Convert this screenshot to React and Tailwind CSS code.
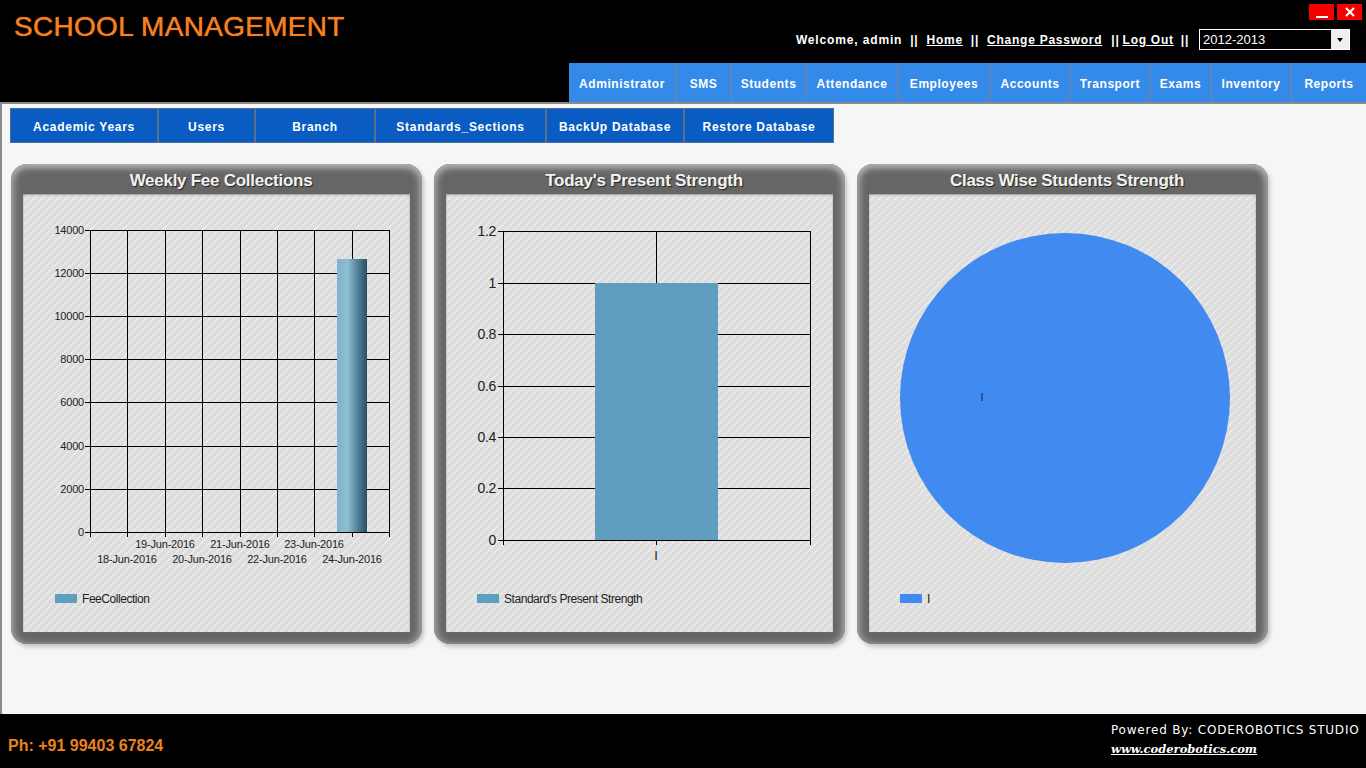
import React from "react";

const topNav = [
  { label: "Administrator", w: "w-[108px]" },
  { label: "SMS", w: "w-[55px]" },
  { label: "Students", w: "w-[75px]" },
  { label: "Attendance", w: "w-[92px]" },
  { label: "Employees", w: "w-[92px]" },
  { label: "Accounts", w: "w-[80px]" },
  { label: "Transport", w: "w-[80px]" },
  { label: "Exams", w: "w-[61px]" },
  { label: "Inventory", w: "w-[80px]" },
  { label: "Reports", w: "w-[74px]" },
];

const subNav = [
  { label: "Academic Years", w: "w-[148px]" },
  { label: "Users", w: "w-[97px]" },
  { label: "Branch", w: "w-[120px]" },
  { label: "Standards_Sections", w: "w-[171px]" },
  { label: "BackUp Database", w: "w-[138px]" },
  { label: "Restore Database", w: "w-[148px]" },
];

// chart drawings use page coordinates through the viewBox
const feeX = [90, 127, 165, 202, 240, 277, 314, 352, 389];
const feeY = [
  { y: 230, v: "14000" },
  { y: 273, v: "12000" },
  { y: 316, v: "10000" },
  { y: 359, v: "8000" },
  { y: 402, v: "6000" },
  { y: 446, v: "4000" },
  { y: 489, v: "2000" },
  { y: 532, v: "0" },
];
const feeDates = [
  { x: 127, y: 563, t: "18-Jun-2016" },
  { x: 165, y: 548, t: "19-Jun-2016" },
  { x: 202, y: 563, t: "20-Jun-2016" },
  { x: 240, y: 548, t: "21-Jun-2016" },
  { x: 277, y: 563, t: "22-Jun-2016" },
  { x: 314, y: 548, t: "23-Jun-2016" },
  { x: 352, y: 563, t: "24-Jun-2016" },
];
const strengthY = [
  { y: 231, v: "1.2" },
  { y: 283, v: "1" },
  { y: 334, v: "0.8" },
  { y: 386, v: "0.6" },
  { y: 437, v: "0.4" },
  { y: 488, v: "0.2" },
  { y: 540, v: "0" },
];

function Legend({ x, color, label }) {
  return (
    <g>
      <rect x={x} y={594} width={22} height={9} fill={color} />
      <text x={x + 27} y={603} fontSize="12" letterSpacing="-0.45" fill="#222">
        {label}
      </text>
    </g>
  );
}

function WeeklyChart() {
  return (
    <svg viewBox="23 194 387 438" className="w-full h-full font-['Liberation_Sans',sans-serif]">
      <defs>
        <linearGradient id="feeBar" x1="0" y1="0" x2="1" y2="0">
          <stop offset="0" stopColor="#7fb2cb" />
          <stop offset="0.35" stopColor="#8fbdd3" />
          <stop offset="0.7" stopColor="#4f7f98" />
          <stop offset="1" stopColor="#2b4f62" />
        </linearGradient>
      </defs>
      {feeX.map((x) => (
        <line key={x} x1={x + 0.5} y1={230} x2={x + 0.5} y2={537} stroke="#000" />
      ))}
      {feeY.map((row) => (
        <g key={row.y}>
          <line x1={85} y1={row.y + 0.5} x2={390} y2={row.y + 0.5} stroke="#000" />
          <text x={84} y={row.y + 4} textAnchor="end" fontSize="11" letterSpacing="-0.2" fill="#222">
            {row.v}
          </text>
        </g>
      ))}
      <rect x={337} y={259} width={30} height={273} fill="url(#feeBar)" />
      {feeDates.map((d) => (
        <text key={d.t} x={d.x} y={d.y} textAnchor="middle" fontSize="11" letterSpacing="-0.2" fill="#222">
          {d.t}
        </text>
      ))}
      <Legend x={55} color="#5f9ebf" label="FeeCollection" />
    </svg>
  );
}

function PresentChart() {
  return (
    <svg viewBox="446 194 387 438" className="w-full h-full font-['Liberation_Sans',sans-serif]">
      {[503, 656, 810].map((x) => (
        <line key={x} x1={x + 0.5} y1={231} x2={x + 0.5} y2={545} stroke="#000" />
      ))}
      {strengthY.map((row) => (
        <g key={row.y}>
          <line x1={498} y1={row.y + 0.5} x2={811} y2={row.y + 0.5} stroke="#000" />
          <text x={496} y={row.y + 5} textAnchor="end" fontSize="14" letterSpacing="-0.3" fill="#222">
            {row.v}
          </text>
        </g>
      ))}
      <rect x={595} y={283} width={123} height={257} fill="#5f9ebf" />
      <text x={656} y={560} textAnchor="middle" fontSize="13" fill="#222">
        I
      </text>
      <Legend x={477} color="#5f9ebf" label="Standard's Present Strength" />
    </svg>
  );
}

function ClassChart() {
  return (
    <svg viewBox="869 194 387 438" className="w-full h-full font-['Liberation_Sans',sans-serif]">
      <circle cx={1065} cy={398} r={165} fill="#418af0" />
      <text x={982} y={401} textAnchor="middle" fontSize="11" fill="#1a1a4a">
        I
      </text>
      <Legend x={900} color="#418af0" label="I" />
    </svg>
  );
}

function Panel({ title, children }) {
  return (
    <div className="w-[411px] h-[480px] flex flex-col rounded-[16px] bg-[#666666] px-3 pb-3 shadow-[inset_0_4px_6px_#b0b0b0,inset_4px_0_6px_#8c8c8c,inset_-4px_0_6px_#8c8c8c,2px_3px_4px_#c4c4c4]">
      <div className="h-[30px] shrink-0 pl-[9px] pt-[6px] text-center text-[17px] leading-[22px] font-bold tracking-[-0.27px] text-[#f2f2f2] [text-shadow:1px_1px_1px_#222]">
        {title}
      </div>
      <div className="flex-1 min-h-0 bg-[#dddddd] bg-[repeating-linear-gradient(135deg,#dddddd_0px,#dddddd_4.243px,#ebebeb_4.243px,#ebebeb_5.657px)] shadow-[inset_0_1px_2px_#999]">
        {children}
      </div>
    </div>
  );
}

export default function App() {
  return (
    <div className="h-[768px] w-[1366px] overflow-hidden flex flex-col bg-black font-['Liberation_Sans',Arial,sans-serif]">
      {/* Header */}
      <div className="h-[63px] shrink-0 flex justify-between">
        <h1 className="pl-[14px] pt-[9px] text-[28px] leading-[36px] font-normal tracking-[0.3px] text-[#f5801e] [text-shadow:0_0_1px_#f5801e]">
          SCHOOL MANAGEMENT
        </h1>
        <div className="flex flex-col items-end pr-[4px] pt-[4px]">
          <div className="flex gap-[3px]">
            <div className="w-[25px] h-[16px] bg-[#f30000] flex items-end justify-center pb-[2px]">
              <div className="w-[12px] h-[2px] bg-white" />
            </div>
            <div className="w-[25px] h-[16px] bg-[#f30000] flex items-center justify-center">
              <svg width="10" height="10" viewBox="0 0 10 10">
                <path d="M1 1L9 9M9 1L1 9" stroke="#fff" strokeWidth="2" fill="none" />
              </svg>
            </div>
          </div>
          <div className="flex items-center mt-[9px] pr-[12px] text-[12px] font-bold tracking-[0.75px] text-white">
            <span className="tracking-[0.85px]">Welcome, admin</span>
            <span className="ml-[8px]">||</span>
            <a className="ml-[8px] underline">Home</a>
            <span className="ml-[8px]">||</span>
            <a className="ml-[8px] underline">Change Password</a>
            <span className="ml-[9px]">||</span>
            <a className="ml-[3px] underline">Log Out</a>
            <span className="ml-[7px]">||</span>
            <div className="ml-[10px] w-[151px] h-[21px] flex items-center justify-between border border-white bg-black pl-[3px] font-normal tracking-normal text-[13px]">
              <span>2012-2013</span>
              <div className="w-[18px] h-[19px] bg-[#f0f0f0] flex items-center justify-center">
                <div className="w-0 h-0 border-x-[3px] border-x-transparent border-t-[4px] border-t-black" />
              </div>
            </div>
          </div>
        </div>
      </div>

      {/* Top navigation */}
      <nav className="h-[39px] shrink-0 flex justify-end">
        {topNav.map((item) => (
          <div
            key={item.label}
            className={`${item.w} flex items-center justify-center pt-[2px] bg-[#348ae8] border-r-2 border-[#5d86b4] text-white text-[12px] font-bold tracking-[0.55px] last:border-r-0`}
          >
            {item.label}
          </div>
        ))}
      </nav>

      {/* Main area */}
      <main className="flex-1 min-h-0 bg-[#f6f6f6] border-t-2 border-l-2 border-[#8a8a8a] pl-[8px] pt-[4px]">
        <div className="flex w-max h-[35px] border border-[#4f6f94]">
          {subNav.map((item) => (
            <div
              key={item.label}
              className={`${item.w} flex items-center justify-center pt-[2px] bg-[#0a5cc2] border-r-2 border-[#5b7089] text-white text-[12px] font-bold tracking-[0.72px] last:border-r-0`}
            >
              {item.label}
            </div>
          ))}
        </div>
        <div className="flex gap-[12px] mt-[21px] pl-[1px]">
          <Panel title="Weekly Fee Collections">
            <WeeklyChart />
          </Panel>
          <Panel title="Today's Present Strength">
            <PresentChart />
          </Panel>
          <Panel title="Class Wise Students Strength">
            <ClassChart />
          </Panel>
        </div>
      </main>

      {/* Footer */}
      <footer className="h-[54px] shrink-0 flex justify-between bg-black">
        <div className="pl-[8px] pt-[22px] text-[16px] leading-[20px] font-bold text-[#e8831f]">
          Ph: +91 99403 67824
        </div>
        <div className="w-[255px] pt-[9px] text-white">
          <div className="text-[12px] leading-[15px] tracking-[0.8px] font-['DejaVu_Sans',sans-serif] whitespace-nowrap">
            Powered By: CODEROBOTICS STUDIO
          </div>
          <a className="block mt-[3px] text-[11.5px] leading-[16px] italic font-bold underline font-['DejaVu_Serif',serif]">
            www.coderobotics.com
          </a>
        </div>
      </footer>
    </div>
  );
}
